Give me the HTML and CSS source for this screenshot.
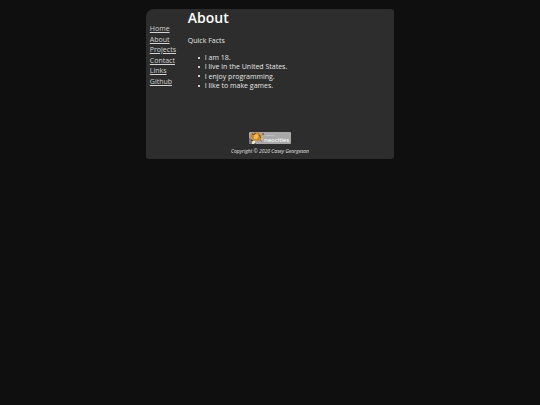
FILE: index.html
```html
<!DOCTYPE html>
<html lang="en">
<head>
    <meta charset="UTF-8">
    <meta name="viewport" content="width=device-width, initial-scale=1.0">
    <title>About</title>
    <link rel="stylesheet" href="styles.css">
</head>
<body>
    <div class="container">
        <div class="columns">
            <nav class="sidebar">
                <a href="index.html">Home</a>
                <a href="about.html">About</a>
                <a href="projects.html">Projects</a>
                <a href="contact.html">Contact</a>
                <a href="links.html">Links</a>
                <a href="github.html">Github</a>
            </nav>
            <main class="content">
                <h1>About</h1>
                <p>Quick Facts</p>
                <ul>
                    <li>I am 18.</li>
                    <li>I live in the United States.</li>
                    <li>I enjoy programming.</li>
                    <li>I like to make games.</li>
                </ul>
            </main>
        </div>
        <footer class="footer">
            <a class="badge" href="https://neocities.org" aria-label="Hosted by Neocities">
                <svg width="42" height="12" viewBox="0 0 42 12">
                    <rect width="42" height="12" rx="1" fill="#a9a9a9"/>
                    <path d="M0 6l3 1 2 5H0z" fill="#777"/>
                    <path d="M2 2l2 0 1-2 2 1 3-1 1 2 2 2-1 4-3 1-3-1-2 2-1-4-2-1z" fill="#c98a2b"/>
                    <path d="M5 3l3-1 2 2-2 3-3 0z" fill="#efb65a"/>
                    <path d="M3 1l1 2 3-2M10 3l2 3" fill="none" stroke="#7a4e16" stroke-width="1"/>
                    <path d="M3 9h3v3H3z" fill="#f0eadc"/>
                    <path d="M2 8l2 1M5 12h2M12 8l1 2" stroke="#4a3423" stroke-width="1"/>
                    <path d="M14 1v2" stroke="#7d2430" stroke-width="1"/>
                    <path d="M13 4v6" stroke="#d8c6ac" stroke-width="1"/>
                    <text class="badge-small" x="16" y="4">hosted by</text>
                    <text class="badge-name" x="15" y="10">neocities</text>
                </svg>
            </a>
            <p class="copyright">Copyright © 2020 Casey Georgeson</p>
        </footer>
    </div>
</body>
</html>
```

FILE: styles.css
```css
body {
    margin: 9px 0;
    background-color: #0f0f0f;
    color: #e6e6e6;
    font-family: "Open Sans", sans-serif;
    font-size: 7px;
}
.container {
    width: 46%;
    margin: 0 auto;
    background-color: #2d2d2d;
    border-radius: 8px 3px 3px 3px;
}
.columns {
    display: flex;
    min-height: 123px;
}
.sidebar {
    display: flex;
    flex-direction: column;
    align-items: flex-start;
    flex: 0 0 38px;
    padding: 15px 0 0 4px;
}
.sidebar a {
    color: #d3d3d3;
    line-height: 1.5;
}
.content {
    flex: 1;
}
h1 {
    margin: 0 0 9px;
    color: #fff;
    font-size: 14px;
    font-weight: 600;
    line-height: 18px;
}
p {
    margin: 0;
    line-height: 10px;
}
ul {
    margin: 7px 0 0;
    padding-left: 10px;
    list-style: none;
    line-height: 1.33;
}
li {
    display: flex;
    align-items: center;
    gap: 5px;
}
li::before {
    content: "";
    width: 2px;
    height: 2px;
    border-radius: 1px;
    background-color: #fff;
}
.footer {
    padding-bottom: 3px;
    text-align: center;
}
.badge svg {
    display: block;
    margin: 0 auto;
}
.badge-small {
    fill: #e0e0e0;
    font-size: 2px;
}
.badge-name {
    fill: #fff;
    font-family: "Noto Sans", sans-serif;
    font-size: 6px;
}
.copyright {
    margin-top: 2px;
    font-size: 5px;
    font-style: italic;
}
```
